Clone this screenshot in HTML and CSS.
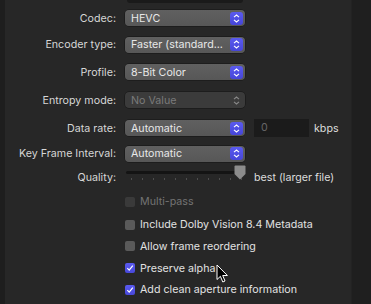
FILE: index.html
```html
<!DOCTYPE html>
<html>
<head>
    <meta charset="utf-8">
    <link rel="stylesheet" href="styles.css">
</head>
<body>
    <div class="sheet">
        <div class="edge-left"></div>
        <div class="panel">
            <div class="prev-field"></div>
            <div class="form">
                <label class="label">Codec:</label>
                <div class="control">
                    <div class="popup"><span>HEVC</span><span class="stepper"><svg width="7" height="9" viewBox="0 0 7 9"><path d="M1 3.2 L3.5 1 L6 3.2 M1 5.8 L3.5 8 L6 5.8" fill="none" stroke="#fff" stroke-width="1.1"/></svg></span></div>
                </div>

                <label class="label">Encoder type:</label>
                <div class="control">
                    <div class="popup"><span>Faster (standard...</span><span class="stepper"><svg width="7" height="9" viewBox="0 0 7 9"><path d="M1 3.2 L3.5 1 L6 3.2 M1 5.8 L3.5 8 L6 5.8" fill="none" stroke="#fff" stroke-width="1.1"/></svg></span></div>
                </div>

                <label class="label">Profile:</label>
                <div class="control">
                    <div class="popup"><span>8-Bit Color</span><span class="stepper"><svg width="7" height="9" viewBox="0 0 7 9"><path d="M1 3.2 L3.5 1 L6 3.2 M1 5.8 L3.5 8 L6 5.8" fill="none" stroke="#fff" stroke-width="1.1"/></svg></span></div>
                </div>

                <label class="label">Entropy mode:</label>
                <div class="control">
                    <div class="popup disabled"><span>No Value</span><span class="stepper"><svg width="7" height="9" viewBox="0 0 7 9"><path d="M1 3.2 L3.5 1 L6 3.2 M1 5.8 L3.5 8 L6 5.8" fill="none" stroke="#8a8a8a" stroke-width="1.1"/></svg></span></div>
                </div>

                <label class="label">Data rate:</label>
                <div class="control">
                    <div class="popup"><span>Automatic</span><span class="stepper"><svg width="7" height="9" viewBox="0 0 7 9"><path d="M1 3.2 L3.5 1 L6 3.2 M1 5.8 L3.5 8 L6 5.8" fill="none" stroke="#fff" stroke-width="1.1"/></svg></span></div>
                    <div class="text-field">0</div>
                    <span class="unit">kbps</span>
                </div>

                <label class="label">Key Frame Interval:</label>
                <div class="control">
                    <div class="popup"><span>Automatic</span><span class="stepper"><svg width="7" height="9" viewBox="0 0 7 9"><path d="M1 3.2 L3.5 1 L6 3.2 M1 5.8 L3.5 8 L6 5.8" fill="none" stroke="#fff" stroke-width="1.1"/></svg></span></div>
                </div>

                <label class="label">Quality:</label>
                <div class="control">
                    <div class="slider">
                        <div class="track"></div>
                        <div class="ticks">
                            <i></i><i></i><i></i><i></i><i></i><i></i><i></i><i></i><i></i><i></i><i></i>
                        </div>
                        <svg class="thumb" width="12" height="15" viewBox="0 0 12 15"><path d="M1.5 0.5 H10.5 Q11.5 0.5 11.5 1.5 V9 L6 14.5 L0.5 9 V1.5 Q0.5 0.5 1.5 0.5 Z" fill="#8c8c8c"/></svg>
                    </div>
                    <span class="hint">best (larger file)</span>
                </div>

                <span></span>
                <div class="check disabled"><span class="box"></span>Multi-pass</div>

                <span></span>
                <div class="check"><span class="box"></span>Include Dolby Vision 8.4 Metadata</div>

                <span></span>
                <div class="check"><span class="box"></span>Allow frame reordering</div>

                <span></span>
                <div class="check"><span class="box on"><svg width="8" height="8" viewBox="0 0 8 8"><path d="M1.3 4.2 L3.2 6.2 L6.8 1.6" fill="none" stroke="#fff" stroke-width="1.2"/></svg></span>Preserve alpha</div>

                <span></span>
                <div class="check"><span class="box on"><svg width="8" height="8" viewBox="0 0 8 8"><path d="M1.3 4.2 L3.2 6.2 L6.8 1.6" fill="none" stroke="#fff" stroke-width="1.2"/></svg></span>Add clean aperture information</div>
            </div>
            <svg class="cursor" width="14" height="20" viewBox="0 0 14 20"><path d="M1 1 V15.5 L4.4 12.3 L6.8 18 L9 17 L6.7 11.5 H11.4 Z" fill="#000" stroke="#fff" stroke-width="1"/></svg>
        </div>
        <div class="edge-right"></div>
    </div>
</body>
</html>
```

FILE: styles.css
```css
body {
    margin: 0;
    width: 371px;
    height: 304px;
    overflow: hidden;
    background: #272727;
    font-family: Inter, "Liberation Sans", sans-serif;
    font-size: 10.7px;
    color: #dcdcdc;
}
.sheet {
    display: flex;
    height: 304px;
}
.edge-left {
    width: 5px;
    background: #1e1e1e;
}
.edge-right {
    width: 19px;
    background: #1f1f1f;
    border-left: 1px solid #232323;
}
.panel {
    flex: 1;
    position: relative;
    background: #272727;
}
.prev-field {
    margin-left: 122px;
    width: 116px;
    height: 3px;
    background: #1a1a1a;
    border-radius: 0 0 3px 3px;
}
.form {
    display: grid;
    grid-template-columns: 111px 1fr;
    grid-template-rows: 26px 27px 28px 28px 28px 23px 24px 25px 21px 22px 22px 21px;
    column-gap: 9px;
    padding-top: 2px;
    align-items: center;
}
.label {
    text-align: right;
    color: #d6d6d6;
    white-space: nowrap;
}
.control {
    display: flex;
    align-items: center;
}
.popup {
    width: 120px;
    height: 16px;
    box-sizing: border-box;
    display: flex;
    align-items: center;
    justify-content: space-between;
    padding: 0 2px 0 6px;
    border-radius: 4px;
    background: linear-gradient(#606060, #575757);
    box-shadow: 0 0 0 0.5px rgba(0, 0, 0, 0.5);
    color: #e8e8e8;
    white-space: nowrap;
}
.stepper {
    width: 13px;
    height: 13px;
    border-radius: 3px;
    background: linear-gradient(#5a5af0, #4646d8);
    display: flex;
    align-items: center;
    justify-content: center;
}
.popup.disabled {
    background: #3b3b3b;
    color: #7a7a7a;
}
.popup.disabled .stepper {
    background: none;
}
.text-field {
    width: 55px;
    height: 18px;
    box-sizing: border-box;
    margin-left: 9px;
    padding-left: 7px;
    line-height: 18px;
    background: #1b1b1b;
    color: #666;
}
.unit {
    margin-left: 5px;
    color: #dcdcdc;
}
.slider {
    position: relative;
    width: 121px;
    height: 20px;
}
.track {
    margin: 4px 0 0 1px;
    width: 115px;
    height: 3px;
    border-radius: 2px;
    background: #141414;
}
.ticks {
    display: flex;
    justify-content: space-between;
    margin: 4px 4px 0 6px;
}
.ticks i {
    width: 1px;
    height: 2px;
    background: #4e4e4e;
}
.thumb {
    position: absolute;
    right: 0;
    top: -2px;
}
.hint {
    margin-left: 8px;
    color: #dcdcdc;
    white-space: nowrap;
}
.check {
    display: flex;
    align-items: center;
    color: #e2e2e2;
    white-space: nowrap;
}
.box {
    width: 10px;
    height: 10px;
    margin-right: 5px;
    border-radius: 2px;
    background: #5a5a5a;
    display: flex;
    align-items: center;
    justify-content: center;
}
.box.on {
    background: linear-gradient(#5a5af0, #4848da);
}
.check.disabled {
    color: #737373;
}
.check.disabled .box {
    background: #3a3a3a;
}
.cursor {
    position: absolute;
    left: 211px;
    top: 264px;
}
```
